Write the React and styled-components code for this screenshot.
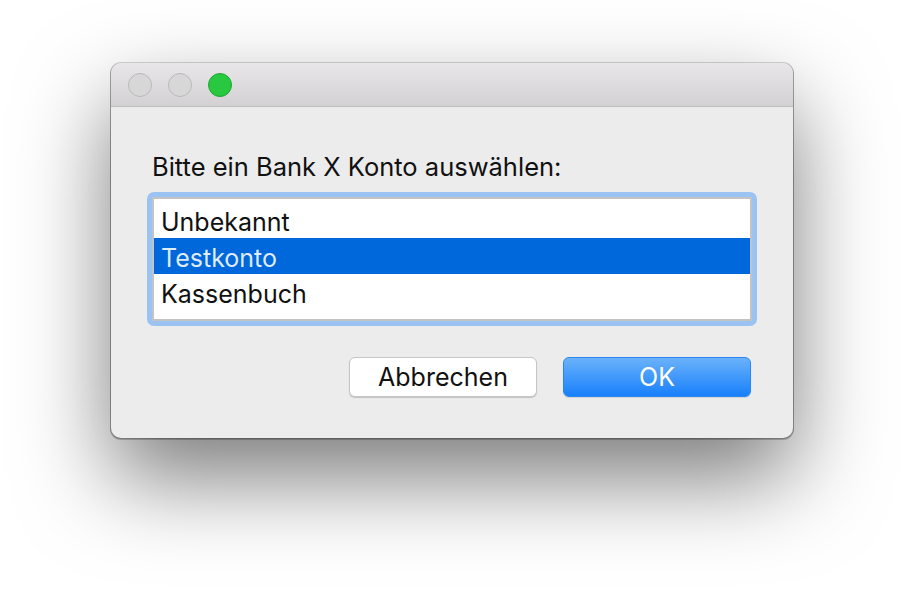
import React from 'react'
import styled, { createGlobalStyle } from 'styled-components'

const GlobalStyle = createGlobalStyle`
  html, body {
    margin: 0;
    padding: 0;
    background: #ffffff;
  }
  body {
    font-family: Inter, "Open Sans", "Liberation Sans", sans-serif;
    -webkit-font-smoothing: antialiased;
  }
`

const accounts = ['Unbekannt', 'Testkonto', 'Kassenbuch']

function App() {
  const selected = 1
  return (
    <Page>
      <GlobalStyle />
      <Window>
        <TitleBar>
          <Light />
          <Light />
          <Light $color="#28c840" $border="#1fa631" />
        </TitleBar>
        <Content>
          <Label>Bitte ein Bank X Konto auswählen:</Label>
          <FocusRing>
            <ListBox>
              {accounts.map((a, i) => (
                <Row key={a} $selected={i === selected}>{a}</Row>
              ))}
            </ListBox>
          </FocusRing>
          <Buttons>
            <Button>Abbrechen</Button>
            <Button $primary>OK</Button>
          </Buttons>
        </Content>
      </Window>
    </Page>
  )
}

export default App

const Page = styled.div`
width: 904px;
height: 598px;
box-sizing: border-box;
padding: 63px 0 0 111px;
overflow: hidden;
`

const Window = styled.div`
width: 682px;
height: 375px;
display: flex;
flex-direction: column;
background: #ececec;
border-radius: 10px;
overflow: hidden;
box-shadow:
  0 0 0 1px rgba(0, 0, 0, 0.16),
  0 1px 0 1px rgba(0, 0, 0, 0.22),
  0 40px 90px rgba(0, 0, 0, 0.52);
`

const TitleBar = styled.div`
height: 43px;
flex: none;
display: flex;
align-items: center;
gap: 16px;
padding-left: 17px;
background: linear-gradient(#e8e6e8, #d3d1d3);
border-bottom: 1px solid #bdbdbd;
`

const Light = styled.span`
width: 22px;
height: 22px;
border-radius: 50%;
background: ${p => p.$color || '#d8d7d8'};
border: 1px solid ${p => p.$border || '#b9b8b9'};
`

const Content = styled.div`
flex: 1;
display: flex;
flex-direction: column;
padding: 45px 36px 0 36px;
`

const Label = styled.div`
font-size: 25.5px;
line-height: 30px;
color: #111;
padding-left: 5px;
margin-bottom: 10px;
`

const FocusRing = styled.div`
padding: 5px;
background: #9ac2f3;
border-radius: 7px;
`

const ListBox = styled.div`
border: 2px solid #c3c3c3;
background: #fff;
height: 117px;
padding-top: 3px;
`

const Row = styled.div`
height: 36px;
display: flex;
align-items: center;
padding-left: 7px;
padding-top: 4px;
box-sizing: border-box;
font-size: 25px;
color: ${p => (p.$selected ? 'rgba(255,255,255,0.88)' : '#111')};
background: ${p => (p.$selected ? '#0068da' : 'transparent')};
`

const Buttons = styled.div`
display: flex;
justify-content: flex-end;
gap: 26px;
margin-top: 31px;
padding-right: 6px;
`

const Button = styled.div`
width: 188px;
height: 40px;
box-sizing: border-box;
display: flex;
align-items: center;
justify-content: center;
border-radius: 6px;
font-size: 25px;
color: ${p => (p.$primary ? '#fff' : '#111')};
background: ${p => (p.$primary ? 'linear-gradient(#6ab2fa, #1880fb)' : '#fff')};
border: 1px solid ${p => (p.$primary ? '#2a86f0' : '#c6c6c6')};
box-shadow: 0 1px 1px rgba(0, 0, 0, ${p => (p.$primary ? '0.12' : '0.18')});
`
